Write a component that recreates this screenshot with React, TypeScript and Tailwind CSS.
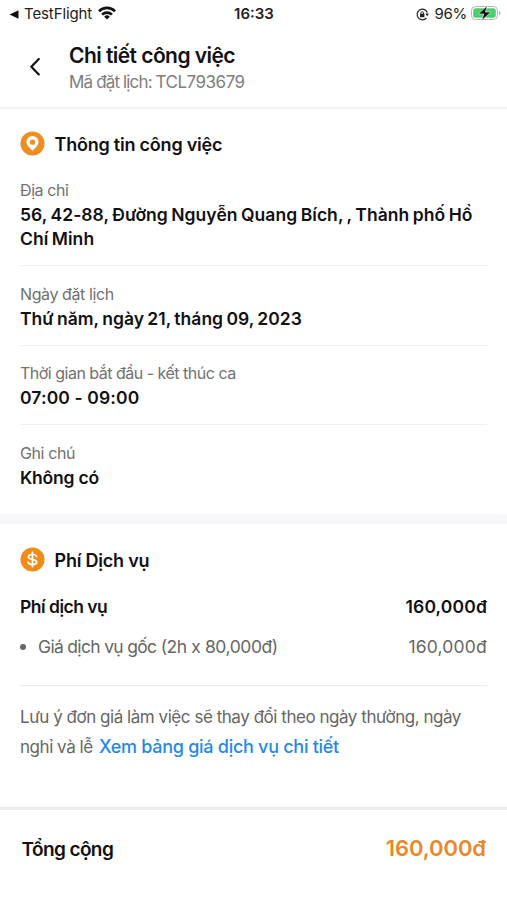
import React from 'react';

interface DetailItem {
  label: string;
  value: string;
  labelClass: string;
  valueClass: string;
}

const details: DetailItem[] = [
  {
    label: 'Địa chỉ',
    value: '56, 42-88, Đường Nguyễn Quang Bích, , Thành phố Hồ Chí Minh',
    labelClass: 'tracking-[-0.4px]',
    valueClass: 'tracking-[0.05px] [word-spacing:-1px]',
  },
  {
    label: 'Ngày đặt lịch',
    value: 'Thứ năm, ngày 21, tháng 09, 2023',
    labelClass: 'tracking-[-0.4px]',
    valueClass: 'tracking-[0.03px] [word-spacing:-1.1px]',
  },
  {
    label: 'Thời gian bắt đầu - kết thúc ca',
    value: '07:00 - 09:00',
    labelClass: 'tracking-[-0.5px]',
    valueClass: 'tracking-[0.12px]',
  },
  {
    label: 'Ghi chú',
    value: 'Không có',
    labelClass: 'tracking-[-0.4px]',
    valueClass: 'tracking-[-0.22px]',
  },
];

const StatusBar: React.FC = () => (
  <div className="grid h-7 grid-cols-3 items-center pl-[9px] pr-[6px] text-[15px] text-[#222]">
    <div className="flex items-center">
      <svg className="mr-[5px] h-[9px] w-[10px]" viewBox="0 0 10 9" fill="#111">
        <path d="M0.5 4.5 9.5 0.3v8.4z" />
      </svg>
      <span className="tracking-[-0.1px]">TestFlight</span>
      <svg className="ml-[6px] mb-[2px] h-[14px] w-[18px]" viewBox="0 0 18 14" fill="none" stroke="#111" strokeWidth="2.6">
        <path d="M1 5.2a11.4 11.4 0 0 1 16 0" />
        <path d="M4.1 8.6a7 7 0 0 1 9.8 0" />
        <path d="M9 13.6 6.2 10.7a4 4 0 0 1 5.6 0z" fill="#111" stroke="none" />
      </svg>
    </div>
    <span className="pr-[2px] text-center font-semibold">16:33</span>
    <div className="flex items-center justify-end">
      <svg className="mr-[6px] h-[13px] w-[13px]" viewBox="0 0 13 13" fill="none" stroke="#222" strokeWidth="1.2">
        <path d="M11.3 4.4A5.3 5.3 0 1 0 10.400 10" />
        <path d="M9.4 5.4H13l-1.8 2.8z" fill="#222" stroke="none" />
        <rect x="4" y="5.8" width="4.4" height="3.4" rx="0.5" fill="#222" stroke="none" />
        <path d="M4.9 6.2V5a1.3 1.3 0 0 1 2.6 0v1.2" strokeWidth="0.9" />
      </svg>
      <span className="tracking-[-0.3px]">96%</span>
      <svg className="mb-[2px] ml-1 h-4 w-[30px]" viewBox="0 0 30 16">
        <rect x="0.5" y="1.5" width="26" height="13" rx="4" fill="#fff" stroke="#b5b5b5" />
        <rect x="2.2" y="3.2" width="22.6" height="9.6" rx="2.5" fill="#48cf70" />
        <path d="M28 5.7c1.8.8 1.8 3.8 0 4.6z" fill="#aaa" />
        <path d="M16.4 0.5 7.4 9h5.400l-2.200 6.800 9.200-8.800h-5.400z" fill="#111" stroke="#fff" strokeWidth="0.6" />
      </svg>
    </div>
  </div>
);

const Header: React.FC = () => (
  <header className="flex h-[81px] items-start border-b-2 border-[#f3f3f4]">
    <button className="ml-[29px] mt-[29px]">
      <svg className="h-[19px] w-3" viewBox="0 0 12 19" fill="none" stroke="#111" strokeWidth="2.2" strokeLinecap="round" strokeLinejoin="round">
        <path d="M9.8 2 2.300 9.700 9.800 17.400" />
      </svg>
    </button>
    <div className="ml-7 mt-[14px]">
      <h1 className="text-[21px] font-semibold leading-7 tracking-[-0.55px]">Chi tiết công việc</h1>
      <p className="text-[17px] leading-6 tracking-[-0.5px] text-[#7d7d7d]">
        <span className="tracking-[-0.85px]">Mã đặt lịch: </span>
        TCL793679
      </p>
    </div>
  </header>
);

const PinIcon: React.FC = () => (
  <svg className="mt-[1px] h-[25px] w-[25px]" viewBox="0 0 26 26">
    <circle cx="13" cy="13" r="12.5" fill="#ee8d22" />
    <path d="M13 20.500c-2.600-2.600-6.300-5.400-6.300-9a6.300 6.300 0 0 1 12.600 0c0 3.600-3.700 6.400-6.300 9z" fill="#fff" />
    <circle cx="13" cy="11.6" r="2.7" fill="#ee8d22" />
  </svg>
);

const DollarIcon: React.FC = () => (
  <svg className="mt-[0.5px] h-[25px] w-[25px]" viewBox="0 0 26 26">
    <circle cx="13" cy="13" r="12.5" fill="#f28c18" />
    <path
      d="M17.200 9.900c-.5-1.400-2-2.100-4.200-2.100-2.500 0-4.200 1-4.200 2.600 0 3.700 8.500 1.600 8.500 5.200 0 1.700-1.700 2.700-4.300 2.700-2.400 0-4.100-.8-4.500-2.400M13 5.500v15"
      fill="none"
      stroke="#fff"
      strokeWidth="1.8"
      strokeLinecap="round"
    />
  </svg>
);

const SectionTitle: React.FC<{ icon: React.ReactNode; title: string }> = ({ icon, title }) => (
  <div className="flex h-[26px] items-start gap-[9.5px]">
    {icon}
    <h2 className="mt-[1.5px] text-[18px] font-semibold leading-[26px] tracking-[-0.22px]">{title}</h2>
  </div>
);

const JobInfo: React.FC = () => (
  <section className="px-5 pt-[21px]">
    <SectionTitle icon={<PinIcon />} title="Thông tin công việc" />
    <div className="mt-[6px]">
      {details.map((item) => (
        <div key={item.label} className="border-b-[1.5px] border-[#f0f0f3] pb-[14px] pt-[15.5px] last:border-0 last:pb-[24px]">
          <p className={`text-[16px] leading-[24.5px] text-[#717171] ${item.labelClass}`}>{item.label}</p>
          <p className={`-mb-[0.5px] pt-[0.5px] text-[17.5px] font-semibold leading-[24.5px] ${item.valueClass}`}>{item.value}</p>
        </div>
      ))}
    </div>
  </section>
);

const ServiceFee: React.FC = () => (
  <section className="h-[283px] px-5 pt-[23px]">
    <SectionTitle icon={<DollarIcon />} title="Phí Dịch vụ" />
    <div className="mt-[21px] flex justify-between text-[17.5px] font-semibold leading-[26px]">
      <span className="tracking-[-0.5px]">Phí dịch vụ</span>
      <span className="tracking-[0.15px]">160,000đ</span>
    </div>
    <div className="mt-[14px] flex items-center justify-between border-b border-[#ececec] pb-[25px] text-[17.5px] leading-[26px] text-[#666]">
      <div className="flex items-center gap-3">
        <span className="h-[6px] w-[6px] rounded-full bg-[#666]" />
        <p className="tracking-[-0.42px]">
          <span className="tracking-[-0.68px]">Giá dịch vụ gốc </span>
          (2h x 80,000đ)
        </p>
      </div>
      <span className="tracking-[0.2px]">160,000đ</span>
    </div>
    <p className="mt-4 whitespace-nowrap text-[17px] leading-[30px] tracking-[-0.46px] text-[#666]">
      Lưu ý đơn giá làm việc sẽ thay đổi theo ngày thường, ngày
      <br />
      nghỉ và lễ{' '}
      <a className="ml-[2px] text-[18px] font-medium tracking-[-0.28px] text-[#2589e4]">Xem bảng giá dịch vụ chi tiết</a>
    </p>
  </section>
);

const App: React.FC = () => {
  return (
    <main className="h-[900px] w-full overflow-hidden bg-white font-[Inter,sans-serif] text-[#111114]">
      <StatusBar />
      <Header />
      <JobInfo />
      <div className="h-[10px] bg-[#f7f7f9]" />
      <ServiceFee />
      <footer className="flex items-start justify-between border-t-[3px] border-[#ececee] pl-[21.5px] pr-[21px] pt-[23px]">
        <span className="mt-[1px] text-[19px] font-semibold leading-8 tracking-[-0.6px]">Tổng cộng</span>
        <span className="-mt-[1px] text-[22px] font-semibold leading-8 tracking-[-0.1px] text-[#e8892b]">160,000đ</span>
      </footer>
    </main>
  );
};

export default App;
